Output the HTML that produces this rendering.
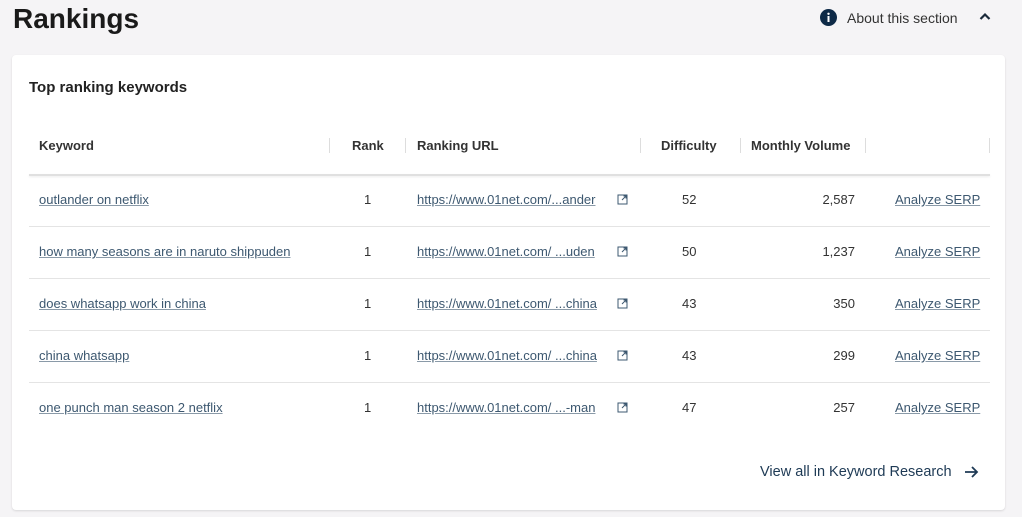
<!DOCTYPE html>
<html><head><style>
body{margin:0;width:1022px;height:517px;background:#f5f4f6;font-family:"Liberation Sans",sans-serif;position:relative;overflow:hidden;color:#222}
.a{position:absolute;white-space:nowrap}
h1{position:absolute;left:13px;top:0;margin:0;font-size:28px;font-weight:bold;color:#1a1a1a;line-height:38px}
.card{position:absolute;left:12px;top:55px;width:993px;height:455px;background:#fff;border-radius:4px;box-shadow:0 1px 2px rgba(0,0,0,.12)}
.h{font-size:13.5px;color:#333;top:138px;font-weight:bold;font-size:13px}
.sep{position:absolute;top:138px;width:1px;height:15px;background:#ddd}
.line{position:absolute;left:29px;width:961px;height:1px;background:#e4e4e4}
.l{font-size:13px;color:#3d5870;text-decoration:underline;text-decoration-color:#8a9aa8}
.n{font-size:13px;color:#333}
</style></head><body>
<h1>Rankings</h1>
<svg class="a" style="left:820px;top:9px" width="17" height="17" viewBox="0 0 17 17"><circle cx="8.5" cy="8.5" r="8.5" fill="#0e2a47"/><rect x="7.5" y="7" width="2" height="6" fill="#fff"/><circle cx="8.5" cy="4.8" r="1.2" fill="#fff"/></svg>
<div class="a" style="left:847px;top:10px;font-size:14px;color:#333">About this section</div>
<svg class="a" style="left:979px;top:12px" width="12" height="9" viewBox="0 0 12 9"><path d="M1.5 7 L6 2.5 L10.5 7" stroke="#1a2a3a" stroke-width="2.2" fill="none"/></svg>
<div class="card"></div>
<div class="a" style="left:29px;top:79px;font-size:15px;color:#222;font-weight:bold">Top ranking keywords</div>
<div class="a h" style="left:39px">Keyword</div>
<div class="sep" style="left:329px"></div>
<div class="a h" style="left:352px">Rank</div>
<div class="sep" style="left:405px"></div>
<div class="a h" style="left:417px">Ranking URL</div>
<div class="sep" style="left:640px"></div>
<div class="a h" style="left:661px">Difficulty</div>
<div class="sep" style="left:740px"></div>
<div class="a h" style="left:751px">Monthly Volume</div>
<div class="sep" style="left:865px"></div>
<div class="sep" style="left:989px"></div>
<div class="line" style="top:174px;height:2px;background:#e0e0e0;box-shadow:0 1px 2px rgba(0,0,0,.08)"></div>
<div class="line" style="top:226px"></div>
<div class="line" style="top:278px"></div>
<div class="line" style="top:330px"></div>
<div class="line" style="top:382px"></div>

<div class="a l" style="left:39px;top:192px">outlander on netflix</div>
<div class="a l" style="left:39px;top:244px">how many seasons are in naruto shippuden</div>
<div class="a l" style="left:39px;top:296px">does whatsapp work in china</div>
<div class="a l" style="left:39px;top:348px">china whatsapp</div>
<div class="a l" style="left:39px;top:400px">one punch man season 2 netflix</div>

<div class="a n" style="left:364px;top:192px">1</div>
<div class="a n" style="left:364px;top:244px">1</div>
<div class="a n" style="left:364px;top:296px">1</div>
<div class="a n" style="left:364px;top:348px">1</div>
<div class="a n" style="left:364px;top:400px">1</div>

<div class="a l" style="left:417px;top:192px">https://www.01net.com/...ander</div>
<div class="a l" style="left:417px;top:244px">https://www.01net.com/ ...uden</div>
<div class="a l" style="left:417px;top:296px">https://www.01net.com/ ...china</div>
<div class="a l" style="left:417px;top:348px">https://www.01net.com/ ...china</div>
<div class="a l" style="left:417px;top:400px">https://www.01net.com/ ...-man</div>
<svg class="a" style="left:617px;top:194px" width="11" height="11"><rect x="1" y="1" width="9" height="9" fill="none" stroke="#3d5870"/><path d="M5 6L9 2M6.5 2H9V4.5" stroke="#3d5870" fill="none"/></svg>
<svg class="a" style="left:617px;top:246px" width="11" height="11"><rect x="1" y="1" width="9" height="9" fill="none" stroke="#3d5870"/><path d="M5 6L9 2M6.5 2H9V4.5" stroke="#3d5870" fill="none"/></svg>
<svg class="a" style="left:617px;top:298px" width="11" height="11"><rect x="1" y="1" width="9" height="9" fill="none" stroke="#3d5870"/><path d="M5 6L9 2M6.5 2H9V4.5" stroke="#3d5870" fill="none"/></svg>
<svg class="a" style="left:617px;top:350px" width="11" height="11"><rect x="1" y="1" width="9" height="9" fill="none" stroke="#3d5870"/><path d="M5 6L9 2M6.5 2H9V4.5" stroke="#3d5870" fill="none"/></svg>
<svg class="a" style="left:617px;top:402px" width="11" height="11"><rect x="1" y="1" width="9" height="9" fill="none" stroke="#3d5870"/><path d="M5 6L9 2M6.5 2H9V4.5" stroke="#3d5870" fill="none"/></svg>

<div class="a n" style="left:682px;top:192px">52</div>
<div class="a n" style="left:682px;top:244px">50</div>
<div class="a n" style="left:682px;top:296px">43</div>
<div class="a n" style="left:682px;top:348px">43</div>
<div class="a n" style="left:682px;top:400px">47</div>

<div class="a n" style="right:167px;top:192px">2,587</div>
<div class="a n" style="right:167px;top:244px">1,237</div>
<div class="a n" style="right:167px;top:296px">350</div>
<div class="a n" style="right:167px;top:348px">299</div>
<div class="a n" style="right:167px;top:400px">257</div>

<div class="a l" style="left:895px;top:192px">Analyze SERP</div>
<div class="a l" style="left:895px;top:244px">Analyze SERP</div>
<div class="a l" style="left:895px;top:296px">Analyze SERP</div>
<div class="a l" style="left:895px;top:348px">Analyze SERP</div>
<div class="a l" style="left:895px;top:400px">Analyze SERP</div>

<div class="a" style="left:760px;top:464px;font-size:14.5px;color:#1e3a55">View all in Keyword Research</div>
<svg class="a" style="left:963px;top:464px" width="16" height="16" viewBox="0 0 16 16"><path d="M2 8H14M9 3L14 8L9 13" stroke="#1e3a55" stroke-width="1.8" fill="none"/></svg>
</body></html>
